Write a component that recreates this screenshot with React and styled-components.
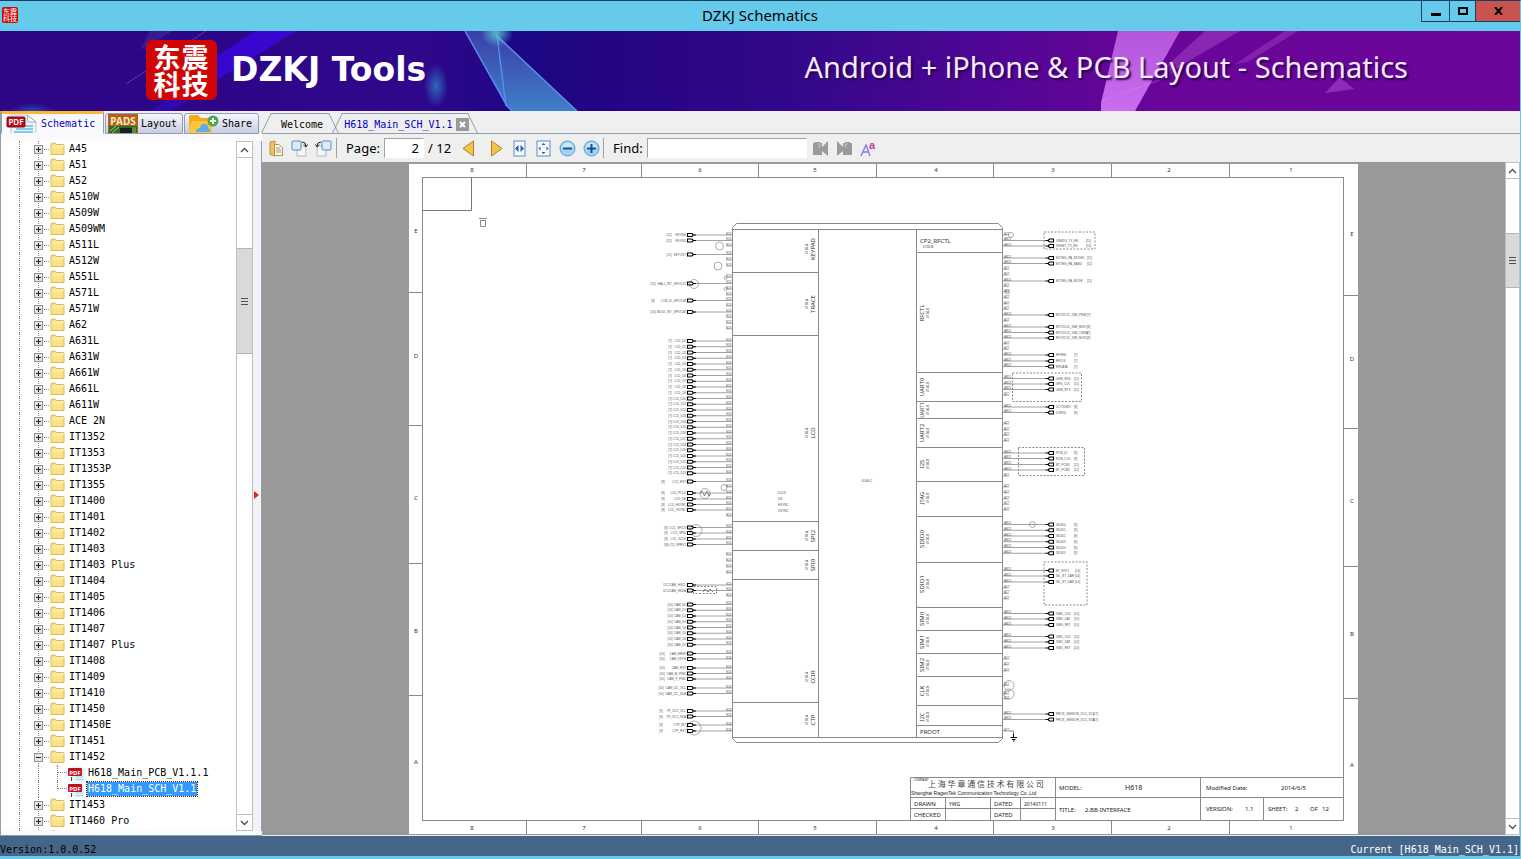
import React from 'react';
import styled, { createGlobalStyle } from 'styled-components';

const GlobalStyle = createGlobalStyle`
  * { box-sizing: border-box; }
  body { margin: 0; overflow: hidden; }
  button, input { font: inherit; color: inherit; margin: 0; padding: 0; border-radius: 0; }
`;

const mono = `'DejaVu Sans Mono', 'Liberation Mono', monospace`;
const sans = `'Noto Sans', 'Open Sans', sans-serif`;

const Window = styled.div`
  height: 100vh;
  display: flex;
  flex-direction: column;
  background: #efefef;
  border-top: 1px solid #17405c;
  border-right: 1px solid #66caeb;
  border-bottom: 3px solid #66caeb;
  font-family: ${mono};
  font-size: 10px;
  color: #000;
`;

const TitleBar = styled.header`
  display: grid;
  grid-template-columns: 1fr auto 1fr;
  height: 30px;
  flex: none;
  background: #66caeb;
  font-family: ${sans};
`;

const TitleIcon = styled.div`
  padding: 6px 2px;
`;

const Title = styled.h1`
  margin: 0;
  font-size: 15px;
  font-weight: 400;
  line-height: 29px;
`;

const WindowButtons = styled.div`
  display: flex;
  justify-content: flex-end;
  height: 21px;
`;

const WindowButton = styled.button`
  display: flex;
  align-items: center;
  justify-content: center;
  width: ${p => p.$width}px;
  border: 1px solid #17405c;
  border-width: 0 0 1px 1px;
  background: ${p => (p.$close ? '#c9544f' : 'transparent')};
`;

const Banner = styled.div`
  position: relative;
  display: flex;
  align-items: center;
  flex: none;
  height: 80px;
  padding: 0 112px 2px 146px;
  background: linear-gradient(90deg, #2c0685 0%, #2e078b 28%, #1b0783 35%, #250483 40%, #310889 52%, #520695 66%, #6a0599 76%, #6c0599 100%);
  color: #fff;
  font-family: ${sans};
`;

const BannerArt = styled.svg`
  position: absolute;
  inset: 0;
  width: 100%;
  height: 100%;
`;

const Logo = styled.div`
  position: relative;
  display: grid;
  grid-template-columns: 28px 28px;
  justify-content: center;
  align-content: center;
  width: 71px;
  height: 60px;
  border-radius: 6px;
  background: #d00606;
  font: 700 27px/27px 'Noto Sans CJK SC', sans-serif;
`;

const Brand = styled.strong`
  position: relative;
  margin-left: 14px;
  font-family: 'DejaVu Sans', sans-serif;
  font-size: 33px;
  line-height: 40px;
  white-space: nowrap;
`;

const Tagline = styled.span`
  position: relative;
  margin: 0 0 7px auto;
  font-size: 29px;
  line-height: 40px;
  white-space: nowrap;
  color: #f6eaff;
  text-shadow: 2px 2px 2px #2a0050;
`;

const Body = styled.div`
  display: flex;
  flex: 1;
  min-height: 0;
`;

const Sidebar = styled.aside`
  display: flex;
  flex-direction: column;
  flex: none;
  width: 262px;
  border-left: 1px solid #8e9fae;
`;

const SideTabs = styled.nav`
  display: flex;
  align-items: flex-end;
  flex: none;
  gap: 1px;
  height: 23px;
`;

const SideTab = styled.button`
  display: flex;
  align-items: center;
  gap: 3px;
  width: ${p => p.$width}px;
  height: ${p => (p.$active ? 23 : 21)}px;
  padding: 0 2px 0 ${p => (p.$active ? 4 : 2)}px;
  border: 1px solid #8e9fb5;
  border-bottom-color: ${p => (p.$active ? '#fafafc' : '#8e9fb5')};
  border-top: ${p => (p.$active ? '3px solid #fdb63c' : '1px solid #8e9fb5')};
  border-radius: ${p => (p.$active ? 0 : '3px 3px 0 0')};
  background: ${p => (p.$active ? '#fafafc' : 'linear-gradient(#f6f7fc, #c9cce2)')};
  color: ${p => (p.$active ? '#0000cc' : '#000')};
  overflow: hidden;

  svg { flex: none; }
`;

const SideBody = styled.div`
  display: flex;
  flex: 1;
  min-height: 0;
  padding: 7px 0 4px;
  background: #fafafc;
  border-bottom: 1px solid #8e9fae;
`;

const Tree = styled.ul`
  flex: 1;
  min-width: 0;
  margin: 0;
  padding: 0 0 0 18px;
  list-style: none;
  overflow: hidden;
  background: #fff;
`;

const TreeItem = styled.li`
  display: flex;
  align-items: center;
  height: 16px;
  padding-left: ${p => (p.$child ? 18 : 14)}px;
  border-left: 1px dotted #808080;
`;

const Guide = styled.span`
  width: 19px;
  height: 16px;
  border-left: 1px dotted #808080;
`;

const Elbow = styled.span`
  width: 11px;
  height: ${p => (p.$last ? 8 : 16)}px;
  align-self: flex-start;
  border-left: 1px dotted #808080;
  background: repeating-linear-gradient(90deg, #808080 0 1px, transparent 1px 2px) 0 7px / 100% 1px no-repeat;
`;

const ExpanderCell = styled.span`
  display: flex;
  align-items: center;
  height: 16px;
  width: 16px;
  background:
    repeating-linear-gradient(#808080 0 1px, transparent 1px 2px) 4px 0 / 1px 100% no-repeat,
    repeating-linear-gradient(90deg, #808080 0 1px, transparent 1px 2px) 10px 8px / 5px 1px no-repeat;
`;

const Expander = styled.button`
  display: flex;
  width: 9px;
  height: 9px;
  border: 1px solid #919191;
  background: #e4e4e4;
`;

const TreeLabel = styled.span`
  margin-left: 3px;
  padding: 0 1px;
  line-height: 14px;
  white-space: pre;
  ${p => p.$selected && `
    background: #3399ff;
    color: #fff;
    outline: 1px dotted #4d2600;
  `}
`;

const Scroll = styled.div`
  display: flex;
  flex-direction: column;
  flex: none;
  width: ${p => p.$width}px;
  border: 1px solid #bfbfbf;
  background: #fff;
`;

const ScrollButton = styled.button`
  display: flex;
  align-items: center;
  justify-content: center;
  flex: none;
  height: 16px;
  border: 0 solid #bfbfbf;
  border-width: ${p => (p.$down ? '1px 0 0' : '0 0 1px')};
  background: #fff;
`;

const Track = styled.div`
  flex: ${p => p.$size};
`;

const Thumb = styled.div`
  display: flex;
  align-items: center;
  justify-content: center;
  flex: ${p => p.$size};
  border: 1px solid #b4b4b4;
  border-width: 1px 0;
  background: #d9d9d9;
`;

const Splitter = styled.div`
  display: flex;
  align-items: center;
  width: 9px;
  padding: 18px 0 0 1px;
  background: #f2f3f6;
  border-right: 1px solid #8e9fae;
`;

const Main = styled.main`
  display: flex;
  flex-direction: column;
  flex: 1;
  min-width: 0;
`;

const DocTabs = styled.nav`
  display: flex;
  align-items: flex-end;
  flex: none;
  height: 23px;
  padding-left: 4px;
  border-bottom: 1px solid #8e9fae;
`;

const DocTab = styled.div`
  position: relative;
  display: flex;
  align-items: center;
  gap: 3px;
  height: 20px;
  margin-right: ${p => (p.$active ? 0 : 4)}px;
  padding: 2px ${p => (p.$active ? 4 : 10)}px 0 ${p => (p.$active ? 7 : 15)}px;
  color: ${p => (p.$active ? '#0000cc' : '#000')};

  &::before, &::after {
    content: '';
    position: absolute;
    inset: 0 50% 0 0;
    border-top: 1px solid #8e9fae;
    border-left: 1px solid #8e9fae;
    transform: skewX(-26deg);
  }
  &::after {
    inset: 0 0 0 50%;
    border-left: 0;
    border-right: 1px solid #8e9fae;
    transform: skewX(26deg);
  }
`;

const TabButton = styled.button`
  position: relative;
  z-index: 1;
  border: 0;
  background: none;
`;

const CloseTab = styled.button`
  position: relative;
  z-index: 1;
  display: flex;
  align-items: center;
  justify-content: center;
  width: 13px;
  height: 13px;
  border: 0;
  background: #999;
`;

const Toolbar = styled.div`
  display: flex;
  align-items: center;
  flex: none;
  height: 28px;
  padding-left: 3px;
  font-family: ${sans};
  font-size: 13px;
`;

const ToolButton = styled.button`
  display: flex;
  align-items: center;
  justify-content: center;
  width: ${p => p.$width || 24}px;
  height: 24px;
  border: 0;
  background: none;
`;

const Divider = styled.span`
  width: 1px;
  height: 20px;
  margin: 0 9px 0 ${p => p.$before}px;
  background: #a0a0a0;
`;

const ToolInput = styled.input`
  width: ${p => p.$width}px;
  height: 20px;
  margin: 0 4px;
  padding: 0 4px;
  border: 1px solid #fff;
  border-top-color: #a0a0a0;
  border-left-color: #a0a0a0;
  background: #fff;
  text-align: ${p => p.$align || 'left'};
`;

const Viewer = styled.div`
  display: flex;
  flex: 1;
  min-height: 0;
  background: #999;
  border-bottom: 1px solid #e6eef5;
`;

const Canvas = styled.div`
  display: flex;
  justify-content: center;
  flex: 1;
  min-width: 0;
  padding: 2px 0 1px;
`;

const Sheet = styled.svg`
  display: block;
  height: 100%;
  background: #fff;
  font-family: 'Noto Sans', sans-serif;
`;

const StatusBar = styled.footer`
  display: flex;
  justify-content: space-between;
  flex: none;
  height: 20px;
  padding: 0 1px 0 0;
  line-height: 27px;
  overflow: hidden;
  background: #466689;
`;

const Current = styled.span`
  color: #fff;
`;

const folders = [
  'A45', 'A51', 'A52', 'A510W', 'A509W', 'A509WM', 'A511L', 'A512W', 'A551L', 'A571L', 'A571W', 'A62',
  'A631L', 'A631W', 'A661W', 'A661L', 'A611W', 'ACE 2N', 'IT1352', 'IT1353', 'IT1353P', 'IT1355', 'IT1400',
  'IT1401', 'IT1402', 'IT1403', 'IT1403 Plus', 'IT1404', 'IT1405', 'IT1406', 'IT1407', 'IT1407 Plus',
  'IT1408', 'IT1409', 'IT1410', 'IT1450', 'IT1450E', 'IT1451', 'IT1452', 'IT1453', 'IT1460 Pro', '',
];

const files = ['H618_Main_PCB_V1.1.1', 'H618_Main_SCH_V1.1'];

const FolderIcon = () => (
  <svg width="15" height="14" viewBox="0 0 15 14">
    <path d="M1 2.5 Q1 1 2 1 H5 L6.5 2.5 H13 Q14 2.5 14 3.5 V12.5 H1Z" fill="#fbe285" stroke="#dcb85a" />
    <path d="M2 5 H13 V3.6 H7" fill="none" stroke="#fff3bd" />
  </svg>
);

const PdfFileIcon = () => (
  <svg width="16" height="15" viewBox="0 0 16 15">
    <path d="M4 0H12L16 4V15H4Z" fill="#e4f3fb" />
    <path d="M8 11H15M8 13.5H15" stroke="#9fd4ec" />
    <path d="M3.5 11V15" stroke="#444" />
    <rect x="0" y="2" width="14" height="8" rx="1" fill="#c0101c" />
    <text x="7" y="8.6" textAnchor="middle" fontSize="6" fontWeight="700" fill="#fff" fontFamily="Noto Sans">PDF</text>
  </svg>
);

const PdfTabIcon = () => (
  <svg width="32" height="20" viewBox="0 0 32 20">
    <path d="M5 1H21L30 8V20H5Z" fill="#e8f3fa" stroke="#b9c8d2" />
    <path d="M21 1L22 8H30Z" fill="#fff" stroke="#9aaab4" />
    <path d="M12 12H27M10 15H27M8 18H27" stroke="#8bc7e6" strokeWidth="2" />
    <rect x="1" y="3" width="18" height="10" rx="1" fill="#b80d1c" stroke="#8b0913" />
    <text x="10" y="11" textAnchor="middle" fontSize="8" fontWeight="600" fill="#fff" fontFamily="Noto Sans">PDF</text>
  </svg>
);

const PadsIcon = () => (
  <svg width="30" height="19" viewBox="0 0 30 19">
    <rect width="30" height="19" fill="#b5601c" />
    <rect x="1" y="12" width="28" height="7" fill="#2f6b25" />
    <path d="M2 17 L8 12 M4 19 L11 13" stroke="#9bcc5c" />
    <rect x="12" y="14" width="12" height="5" fill="#182218" />
    <path d="M25 13V19M27 13V19" stroke="#6ebb4b" />
    <text x="15" y="11" textAnchor="middle" fontSize="10" fontWeight="700" fill="#f4ebc0" fontFamily="Noto Sans">PADS</text>
  </svg>
);

const ShareIcon = () => (
  <svg width="32" height="19" viewBox="0 0 32 19">
    <path d="M2 3Q2 1 4 1H11L14 4H24V19H2Z" fill="#f6a81c" />
    <path d="M2 17 Q3 7 6 7H25V19H2Z" fill="#fdc63c" />
    <path d="M9 18Q9 14 13 14Q14 8 19 10Q22 12 21 14Q24 15 23 18Z" fill="#62abe8" />
    <circle cx="26" cy="7" r="5.5" fill="#49a847" />
    <path d="M26 4V10M23 7H29" stroke="#fff" strokeWidth="2" />
  </svg>
);

const Chevron = ({ down }) => (
  <svg width="9" height="6" viewBox="0 0 9 6">
    <path d={down ? 'M1 1L4.5 4.5L8 1' : 'M1 5L4.5 1.5L8 5'} fill="none" stroke="#505050" strokeWidth="1.4" />
  </svg>
);

const PageStack = () => (
  <>
    <path d="M6 6H13L15 8V16H6Z" fill="#f4f6f8" stroke="#b3bac2" />
    <rect x="1" y="1" width="9" height="9" rx="1" fill="#dcecfb" stroke="#5c87b8" />
    <path d="M11 2Q15 2 15 6M13 4.5L15 7L16.5 4.5" fill="none" stroke="#222" />
  </>
);

const Glyph = ({ name }) => (
  <svg width="17" height="17" viewBox="0 0 17 17">
    {name === 'open' && (
      <>
        <path d="M2 2L7 1V16L2 14.5Z" fill="#eebf62" stroke="#c28f35" />
        <path d="M6.5 4.5H11L14.5 8V15.5H6.5Z" fill="#fff6da" stroke="#b99349" />
        <path d="M8 8H12M8 10H13M8 12H13" stroke="#8c9fb5" />
      </>
    )}
    {name === 'rotateRight' && <PageStack />}
    {name === 'rotateLeft' && <g transform="matrix(-1 0 0 1 17 0)"><PageStack /></g>}
    {name === 'prev' && <path d="M13.5 1V16L3 8.5Z" fill="#f2c64a" stroke="#b5811d" />}
    {name === 'next' && <path d="M3.5 1V16L14 8.5Z" fill="#f2c64a" stroke="#b5811d" />}
    {name === 'fitWidth' && (
      <>
        <rect x="3" y="1" width="11" height="15" fill="#f4f8fd" stroke="#5f8fc4" />
        <path d="M7.5 5V12L4 8.5ZM9.5 5V12L13 8.5Z" fill="#1f5fae" />
      </>
    )}
    {name === 'fitPage' && (
      <>
        <rect x="2" y="1" width="13" height="15" fill="#f4f8fd" stroke="#5f8fc4" />
        <path d="M8.5 3L10.5 5H6.5ZM8.5 14L10.5 12H6.5ZM3.5 8.5L5.5 6.5V10.5ZM13.5 8.5L11.5 6.5V10.5Z" fill="#1f5fae" />
      </>
    )}
    {(name === 'zoomOut' || name === 'zoomIn') && (
      <>
        <circle cx="8.5" cy="8.5" r="7.5" fill="#9ed4f3" stroke="#5c9bc4" />
        <path d="M3 8A5.5 5.5 0 0 1 14 8Z" fill="#c8e8fa" />
        <path d={name === 'zoomIn' ? 'M4 8.5H13M8.5 4V13' : 'M4 8.5H13'} stroke="#15518f" strokeWidth="2" />
      </>
    )}
    {(name === 'findPrev' || name === 'findNext') && (
      <g transform={name === 'findNext' ? 'matrix(-1 0 0 1 17 0)' : undefined}>
        <path d="M1 3H3V2H8V3H10V7L16 1V16L10 11V15H1Z" fill="#9a9a9a" />
        <path d="M5 4H8V7H6" fill="none" stroke="#c4c4c4" />
      </g>
    )}
    {name === 'matchCase' && (
      <>
        <path d="M1 16L6 5L10 16M3 12H9" fill="none" stroke="#8d78e8" strokeWidth="1.4" />
        <text x="9" y="9" fontSize="11" fontWeight="700" fill="#c9389a" fontFamily="Liberation Sans">a</text>
      </>
    )}
  </svg>
);

function Tool({ name, label, width }) {
  return <ToolButton aria-label={label} $width={width}><Glyph name={name} /></ToolButton>;
}

function ScrollBar({ before, thumb, after, width }) {
  return (
    <Scroll $width={width}>
      <ScrollButton aria-label="Scroll up"><Chevron /></ScrollButton>
      <Track $size={before} />
      <Thumb $size={thumb}>
        <svg width="7" height="7" viewBox="0 0 7 7"><path d="M0 .5H7M0 3.5H7M0 6.5H7" stroke="#505050" /></svg>
      </Thumb>
      <Track $size={after} />
      <ScrollButton $down aria-label="Scroll down"><Chevron down /></ScrollButton>
    </Scroll>
  );
}

function Folder({ name }) {
  const open = name === 'IT1452';
  return (
    <>
      <TreeItem>
        <ExpanderCell>
          <Expander aria-label={open ? 'Collapse' : 'Expand'}>
            <svg width="7" height="7" viewBox="0 0 7 7"><path d={open ? 'M1 3.5H6' : 'M1 3.5H6M3.5 1V6'} stroke="#222" /></svg>
          </Expander>
        </ExpanderCell>
        <FolderIcon />
        <TreeLabel>{name}</TreeLabel>
      </TreeItem>
      {open && files.map((file, i) => (
        <TreeItem key={file} $child>
          <Guide />
          <Elbow $last={i === files.length - 1} />
          <PdfFileIcon />
          <TreeLabel $selected={i === 1}>{file}</TreeLabel>
        </TreeItem>
      ))}
    </>
  );
}

// schematic sheet -----------------------------------------------------------

const columns = [[472, 8], [584, 7], [700, 6], [815, 5], [936, 4], [1053, 3], [1169, 2], [1291, 1]];
const columnTicks = [526, 641, 758, 876, 993, 1111, 1229];
const rows = [[233, 'E'], [358, 'D'], [500, 'C'], [633, 'B'], [764, 'A']];
const rowTicks = [292, 425, 563, 695];

const leftBlocks = [[249, 'KEYPAD'], [304, 'TRACE'], [433, 'LCD'], [536, 'SPI2'], [565, 'SPI0'], [677, 'CCIR'], [720, 'CTP']];
const rightBlocks = [
  [313, 'RFCTL'], [387, 'UART0'], [410, 'UART1'], [433, 'UART2'], [464, 'I2S'], [498, 'JTAG'], [539, 'SDIO0'],
  [584, 'SDIO1'], [619, 'SIM0'], [642, 'SIM1'], [665, 'SIM2'], [691, 'CLK'], [717, 'I2C'],
];
const leftLines = [272, 335, 521, 550, 579, 702];
const rightLines = [252, 372, 401, 418, 447, 481, 516, 562, 607, 630, 653, 676, 705, 725];

const run = (from, count, prefix, ref, refX) =>
  Array.from({ length: count }, (_, i) => [from + i * 5.75, prefix + i, ref, refX]);

// [y, net name, sheet reference, x of the reference]
const leftPorts = [
  [235, 'KEYIN0', '[12]', 669], [240.5, 'KEYIN1', '[12]', 669], [254.5, 'KEYOUT', '[12]', 669],
  [283.5, 'HALL_INT_GPIO147', '[15]', 653], [300.5, 'LCM_ID_GPIO148', '[8]', 653], [312, 'BUCK_INT_GPIO146', '[10]', 653],
  ...run(341, 24, 'LCD_D', '[7]', 670),
  [481.5, 'LCD_RST', '[8]', 663], [493, 'LCD_PCLK', '[8]', 663], [499, 'LCD_DE', '[8]', 663],
  [504.5, 'LCD_HSYNC', '[8]', 663], [510, 'LCD_VSYNC', '[8]', 663],
  [527.5, 'LCD_SPICS', '[8]', 666], [533, 'LCD_SPID', '[8]', 666], [539, 'LCD_SCLK', '[8]', 666], [544.5, 'LCD_SPRST', '[8]', 666],
  [585, 'I2C1CAM_HSCL', '', 669], [590.5, 'I2C1CAM_HSDA', '', 669],
  ...run(604.5, 8, 'CAM_D', '[10]', 670),
  [653.5, 'CAM_HREF', '[10]', 662], [659, 'CAM_VSYN', '[10]', 662], [668, 'CAM_RST', '[10]', 662],
  [673.5, 'CAM_M_PWD', '[10]', 662], [679, 'CAM_F_PWD', '[10]', 662],
  [688, 'CAM_I2C_SCL', '[10]', 661], [693.5, 'CAM_I2C_SDA', '[10]', 661],
  [711, 'TP_I2C1_SCL', '[9]', 661], [716.5, 'TP_I2C1_SDA', '[9]', 661], [725, 'CTP_INT', '[9]', 661], [731, 'CTP_RST', '[9]', 661],
];
const leftStubs = [246, 260, 266, 277.5, 289, 295, 306, 317.5, 323.5, 329, 487, 516, 555, 561, 567, 573, 596];

const rightPorts = [
  [240.5, 'GSM2G_TX_EN', '[11]', 1086], [246, 'WIFIBT_TX_EN', '[14]', 1086],
  [258, 'EXTMG_PA_MODE1', '[11]', 1087], [263.5, 'EXTMG_PA_BAND', '[11]', 1087], [281, 'EXTMG_PA_MODE', '[11]', 1087],
  [315, 'RXTXCLK_26M_PWM', '[7]', 1087], [327, 'RXTXCLK_26M_MISO', '[8]', 1087],
  [332.5, 'RXTXCLK_26M_CMSA', '[7]', 1087], [338, 'RXTXCLK_26M_MOSI', '[8]', 1087],
  [355, 'RFSEN', '[7]', 1074], [361, 'RFCLK', '[7]', 1074], [366.5, 'RFDATA', '[7]', 1074],
  [378.5, 'GSM_RXD', '[11]', 1074], [384, 'GPS_CLK', '[11]', 1074], [389.5, 'GSM_RTS', '[11]', 1074],
  [407, 'UCTXDRX', '[8]', 1074], [412.5, 'U1RXD', '[8]', 1074],
  [453, 'PCM_DI', '[8]', 1074], [458.5, 'PCM_CLK', '[8]', 1074], [464.5, 'BT_PCM1', '[11]', 1074], [470, 'BT_PCM2', '[11]', 1074],
  ...run(524.5, 6, 'SD0D', '[8]', 1074),
  [570.5, 'BT_RST1', '[14]', 1075], [576, 'WL_BT_DAR', '[14]', 1075], [582, 'WL_BT_DAB', '[14]', 1075],
  [613.5, 'SIM0_CLK', '[10]', 1074], [619, 'SIM0_DAT', '[10]', 1074], [625, 'SIM0_RST', '[10]', 1074],
  [636.5, 'SIM1_CLK', '[10]', 1074], [642, 'SIM1_DAT', '[10]', 1074], [648, 'SIM1_RST', '[10]', 1074],
  [714, 'PROX_SENSOR_I2C0_SCL', '[17]', 1093], [719.5, 'PROX_SENSOR_I2C0_SDA', '[17]', 1093],
];
const rightStubs = [
  235, 269.5, 275, 286.5, 292, 298, 304, 309.5, 321, 344, 349.5, 395.5, 424, 430, 435.5, 441, 476,
  487, 493, 499, 504.5, 510, 588, 593.5, 599, 659, 665, 671, 685.5, 694, 699, 731,
];

const circles = [
  [719.5, 246, 4], [718, 266, 4], [694, 284, 4.5], [705, 493.5, 5], [724, 487.5, 3], [696, 530.5, 6], [694, 728, 7],
  [1011, 235, 2.5], [1007.5, 292, 2], [1032.5, 524.5, 3], [1009, 685.5, 5], [1009, 694, 5], [725.5, 278, 1.5], [725.5, 289, 1.5],
];
const dashed = [[1044, 232, 51, 17], [1012.5, 373, 69, 28.5], [1018.5, 447.5, 66, 28], [1044, 562, 43, 43], [693.5, 586.5, 23, 7]];

const titleBlock = [
  [914, 806, 'DRAWN', 6], [949, 806, 'YWG', 5], [994, 806, 'DATED', 6], [1024, 806, '20140111', 5],
  [914, 817, 'CHECKED', 6], [994, 817, 'DATED', 6], [1059, 790, 'MODEL:', 6], [1125, 790, 'H618', 7],
  [1059, 812, 'TITLE:', 6], [1085, 812, '2.BB-INTERFACE', 6], [1206, 790, 'Modified Date:', 6], [1281, 790, '2014/6/5', 6],
  [1206, 811, 'VERSION:', 6], [1245, 811, '1.1', 6], [1268, 811, 'SHEET:', 6], [1295, 811, '2', 6], [1310, 811, 'OF', 6], [1322, 811, '12', 6],
];

function Schematic() {
  return (
    <Sheet viewBox="409 164 949 670" preserveAspectRatio="xMidYMin meet" role="img" aria-label="H618 BB-INTERFACE schematic, sheet 2">
      <g fill="none" stroke="#8a8a8a">
        <rect x="422.5" y="177.5" width="921" height="643" />
        <path d="M422.5 210.5H471.5V177.5" stroke="#777" />
        <path d="M479 218.5H487M480 220.5H486M480.5 221V226.5H485.5V221" />
        {columnTicks.map(x => <path key={x} d={`M${x + 0.5} 164V177M${x + 0.5} 821V834`} />)}
        {rowTicks.map(y => <path key={y} d={`M409 ${y + 0.5}H422M1344 ${y + 3.5}H1358`} />)}
        <path d="M736.5 223.5H998.5L1002.5 227.5V738.5L998.5 742.5H736.5L732.5 738.5V227.5Z" />
        <path d="M732.5 229.5H1002.5M732.5 737.5H1002.5M818.5 229.5V737.5M916.5 229.5V737.5" />
        {leftLines.map(y => <path key={y} d={`M732.5 ${y + 0.5}H818.5`} />)}
        {rightLines.map(y => <path key={y} d={`M916.5 ${y + 0.5}H1002.5`} />)}
        <path d="M910.5 820.5V777.5H1343.5M910.5 797.5H1343.5M910.5 808.5H1055.5M945.5 797.5V820.5M990.5 797.5V820.5M1020.5 797.5V820.5M1055.5 777.5V820.5M1200.5 777.5V820.5M1263.5 797.5V820.5" />
        {circles.map(([x, y, r]) => <circle key={`${x},${y}`} cx={x} cy={y} r={r} strokeWidth=".7" />)}
        {dashed.map(([x, y, w, h]) => <rect key={`${x},${y}`} x={x} y={y} width={w} height={h} strokeDasharray="2 1.5" />)}
        <path d="M700 493.5L702 491L704.5 496L707 491L709 496L710 493.5M703 592L705 589L708 592L710 589L713 592" stroke="#666" strokeWidth=".8" />
      </g>

      <g fill="#333" fontSize="6" textAnchor="middle">
        {columns.map(([x, n]) => (
          <React.Fragment key={n}>
            <text x={x} y="172">{n}</text>
            <text x={x} y="830">{n}</text>
          </React.Fragment>
        ))}
        {rows.map(([y, n]) => (
          <React.Fragment key={n}>
            <text x="416" y={y}>{n}</text>
            <text x="1352" y={y + 3}>{n}</text>
          </React.Fragment>
        ))}
        {leftBlocks.map(([y, n]) => (
          <React.Fragment key={n}>
            <text transform={`translate(815 ${y}) rotate(-90)`}>{n}</text>
            <text transform={`translate(808 ${y}) rotate(-90)`} fontSize="3">U100-A</text>
          </React.Fragment>
        ))}
        {rightBlocks.map(([y, n]) => (
          <React.Fragment key={n}>
            <text transform={`translate(924 ${y}) rotate(-90)`} fontSize={n === 'UART1' ? 5 : 6}>{n}</text>
            <text transform={`translate(929 ${y}) rotate(-90)`} fontSize="3">U100-B</text>
          </React.Fragment>
        ))}
        <text x="920" y="243" textAnchor="start">CP2_RFCTL</text>
        <text x="928" y="248" fontSize="3">U100-B</text>
        <text x="920" y="734" textAnchor="start">PROOT</text>
        <text x="867" y="482" fontSize="3" fontFamily="Liberation Sans, sans-serif">U100-C</text>
      </g>

      <g fill="#555" fontSize="3" fontFamily="Liberation Sans, sans-serif">
        <text x="778" y="494">DCLK</text>
        <text x="778" y="500">DE</text>
        <text x="778" y="506">HSYNC</text>
        <text x="778" y="512">VSYNC</text>
        {leftPorts.map(([y, name, ref, x]) => (
          <g key={y}>
            <path d={`M694 ${y}H732.5`} stroke="#8a8a8a" strokeWidth=".8" />
            <path d={`M687.5 ${y - 1.5}H692L693.5 ${y}L692 ${y + 1.5}H687.5ZM693.5 ${y}H696`} fill="none" stroke="#000" strokeWidth="1.1" />
            <text x="686" y={y + 1} textAnchor="end">{name}</text>
            <text x={x} y={y + 1} textAnchor="middle">{ref}</text>
            <text x="726" y={y - 0.5}>N24</text>
          </g>
        ))}
        {leftStubs.map(y => (
          <g key={y}>
            <path d={`M726 ${y}H732.5`} stroke="#8a8a8a" strokeWidth=".6" />
            <text x="726" y={y - 0.5}>B23</text>
          </g>
        ))}
        {rightPorts.map(([y, name, ref, x]) => (
          <g key={y}>
            <path d={`M1002.5 ${y}H1046`} stroke="#8a8a8a" strokeWidth=".8" />
            <path d={`M1045.5 ${y}H1048L1049.5 ${y - 1.5}H1053.5V${y + 1.5}H1049.5L1048 ${y}`} fill="none" stroke="#000" strokeWidth="1.1" />
            <text x="1056" y={y + 1}>{name}</text>
            <text x={x} y={y + 1}>{ref}</text>
            <text x="1004" y={y - 0.5}>AB21</text>
          </g>
        ))}
        {rightStubs.map(y => (
          <g key={y}>
            <path d={`M1002.5 ${y}H1009`} stroke="#8a8a8a" strokeWidth=".6" />
            <text x="1004" y={y - 0.5}>A27</text>
          </g>
        ))}
        <path d="M1009 731H1013.5V735" fill="none" stroke="#8a8a8a" />
        <path d="M1013.5 734V738M1010.5 737.5H1017M1012 739.5H1015.5M1013 741H1014.5" stroke="#000" />
      </g>

      <g fill="#222">
        {titleBlock.map(([x, y, value, size]) => <text key={`${x},${y}`} x={x} y={y} fontSize={size}>{value}</text>)}
        <text x="914" y="781" fontSize="3">COMPANY</text>
        <text x="928" y="787" fontSize="8" fill="#444" fontFamily="Noto Sans CJK SC">上 海 华 章 通 信 技 术 有 限 公 司</text>
        <text x="911" y="795" fontSize="5" fontFamily="Liberation Sans, sans-serif">Shanghai RagenTek Communication Technology Co.,Ltd</text>
      </g>
    </Sheet>
  );
}

function BannerPicture() {
  return (
    <BannerArt viewBox="0 31 1520 80" preserveAspectRatio="none" aria-hidden="true">
      <defs>
        <linearGradient id="shard" x1="0" y1="0" x2="0" y2="1">
          <stop offset="0" stopColor="#3a3fa8" />
          <stop offset="1" stopColor="#3f7fc8" />
        </linearGradient>
        <linearGradient id="violet" x1="0" y1="0" x2="0" y2="1">
          <stop offset="0" stopColor="#b455da" />
          <stop offset="1" stopColor="#c96df0" />
        </linearGradient>
        <radialGradient id="glow">
          <stop offset="0" stopColor="#2f7fc4" />
          <stop offset="1" stopColor="#2f7fc4" stopOpacity="0" />
        </radialGradient>
        <radialGradient id="spark">
          <stop offset="0" stopColor="#5fe0d8" />
          <stop offset="1" stopColor="#5fe0d8" stopOpacity="0" />
        </radialGradient>
      </defs>
      <path d="M255 31H296L210 84H175Z" fill="#3a07dc" opacity=".85" />
      <path d="M150 111L190 84H215L170 111Z" fill="#3a07dc" opacity=".5" />
      <path d="M206 31L126 84" stroke="#6d60bd" opacity=".6" />
      <path d="M150 31H173L140 50Z" fill="#4a3ba0" opacity=".4" />
      <ellipse cx="436" cy="86" rx="12" ry="22" fill="url(#glow)" opacity=".8" />
      <ellipse cx="32" cy="112" rx="24" ry="9" fill="url(#glow)" opacity=".6" />
      <path d="M465 31H495L507 106Z" fill="url(#shard)" />
      <path d="M497 35L577 111H512L506 104Z" fill="url(#shard)" />
      <path d="M465 31L507 106L512 111M577 111L497 36L506 106" fill="none" stroke="#5a8df0" strokeWidth="1.5" />
      <ellipse cx="497" cy="33" rx="16" ry="14" fill="url(#spark)" opacity=".8" />
      <path d="M1118 31H1180L1135 111H1101V103Z" fill="url(#violet)" />
      <path d="M1205 31H1240L1170 72H1160Z" fill="#a03ac4" opacity=".6" />
      <path d="M1285 31H1298L1248 62L1235 64Z" fill="#a03ac4" opacity=".5" />
      <path d="M1340 77L1354 89L1325 93Z" fill="#a03ac4" opacity=".7" />
      <path d="M1101 101L1165 78L1185 62" fill="none" stroke="#d88cf2" opacity=".4" />
    </BannerArt>
  );
}

export default function App() {
  return (
    <Window>
      <GlobalStyle />
      <TitleBar>
        <TitleIcon>
          <svg width="16" height="16" viewBox="0 0 16 16">
            <rect width="16" height="16" rx="2" fill="#d00606" />
            <g fill="#fff" fontSize="7" fontFamily="Noto Sans CJK SC">
              <text x="1" y="7">东震</text>
              <text x="1" y="14">科技</text>
            </g>
          </svg>
        </TitleIcon>
        <Title>DZKJ Schematics</Title>
        <WindowButtons>
          <WindowButton aria-label="Minimize" $width={28}>
            <svg width="10" height="9"><path d="M0 7.5H10" stroke="#000" strokeWidth="3" /></svg>
          </WindowButton>
          <WindowButton aria-label="Maximize" $width={26}>
            <svg width="10" height="8"><rect x="1" y="1" width="8" height="6" fill="none" stroke="#000" strokeWidth="2" /></svg>
          </WindowButton>
          <WindowButton aria-label="Close" $width={45} $close>
            <svg width="9" height="8"><path d="M1 0L8 8M8 0L1 8" stroke="#000" strokeWidth="2" /></svg>
          </WindowButton>
        </WindowButtons>
      </TitleBar>

      <Banner>
        <BannerPicture />
        <Logo><span>东</span><span>震</span><span>科</span><span>技</span></Logo>
        <Brand>DZKJ Tools</Brand>
        <Tagline>Android + iPhone &amp; PCB Layout - Schematics</Tagline>
      </Banner>

      <Body>
        <Sidebar>
          <SideTabs>
            <SideTab $active $width={103}><PdfTabIcon />Schematic</SideTab>
            <SideTab $width={78}><PadsIcon />Layout</SideTab>
            <SideTab $width={75}><ShareIcon />Share</SideTab>
          </SideTabs>
          <SideBody>
            <Tree>
              {folders.map(name => <Folder key={name} name={name} />)}
            </Tree>
            <ScrollBar before={91} thumb={104} after={463} width={17} />
            <Splitter>
              <svg width="5" height="8" viewBox="0 0 5 8"><path d="M0 0L5 4L0 8Z" fill="#e02818" /></svg>
            </Splitter>
          </SideBody>
        </Sidebar>

        <Main>
          <DocTabs>
            <DocTab><TabButton>Welcome</TabButton></DocTab>
            <DocTab $active>
              <TabButton>H618_Main_SCH_V1.1</TabButton>
              <CloseTab aria-label="Close tab">
                <svg width="7" height="7"><path d="M1 1L6 6M6 1L1 6" stroke="#fff" strokeWidth="2" /></svg>
              </CloseTab>
            </DocTab>
          </DocTabs>
          <Toolbar>
            <Tool name="open" label="Open" width={22} />
            <Tool name="rotateRight" label="Rotate right" />
            <Tool name="rotateLeft" label="Rotate left" />
            <Divider $before={1} />
            <label htmlFor="page">Page:</label>
            <ToolInput id="page" defaultValue="2" $width={40} $align="right" />
            <span>/ 12</span>
            <Tool name="prev" label="Previous page" width={34} />
            <Tool name="next" label="Next page" width={22} />
            <Tool name="fitWidth" label="Fit width" />
            <Tool name="fitPage" label="Fit page" />
            <Tool name="zoomOut" label="Zoom out" />
            <Tool name="zoomIn" label="Zoom in" />
            <Divider $before={0} />
            <label htmlFor="find">Find:</label>
            <ToolInput id="find" $width={160} />
            <Tool name="findPrev" label="Find previous" width={20} />
            <Tool name="findNext" label="Find next" width={28} />
            <Tool name="matchCase" label="Match case" width={20} />
          </Toolbar>
          <Viewer>
            <Canvas><Schematic /></Canvas>
            <ScrollBar before={54} thumb={53} after={533} width={15} />
          </Viewer>
        </Main>
      </Body>

      <StatusBar>
        <span>Version:1.0.0.52</span>
        <Current>Current [H618_Main_SCH_V1.1]</Current>
      </StatusBar>
    </Window>
  );
}
